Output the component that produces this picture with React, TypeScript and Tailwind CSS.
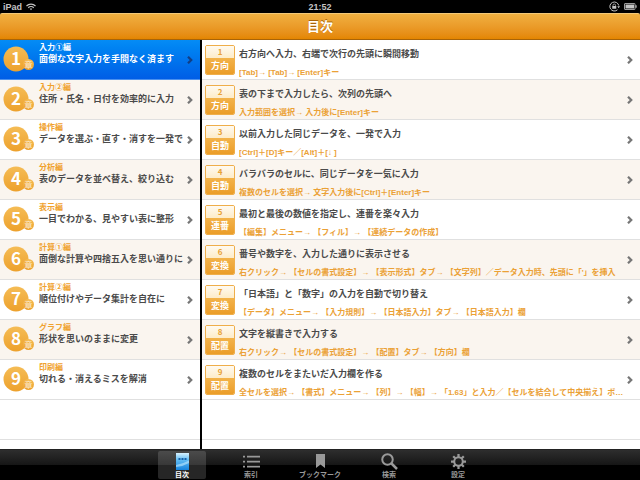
import type { ReactNode } from "react";

const chapters = [
  { label: "入力①編", title: "面倒な文字入力を手間なく済ます" },
  { label: "入力②編", title: "住所・氏名・日付を効率的に入力" },
  { label: "操作編", title: "データを選ぶ・直す・消すを一発で" },
  { label: "分析編", title: "表のデータを並べ替え、絞り込む" },
  { label: "表示編", title: "一目でわかる、見やすい表に整形" },
  { label: "計算①編", title: "面倒な計算や四捨五入を思い通りに" },
  { label: "計算②編", title: "順位付けやデータ集計を自在に" },
  { label: "グラフ編", title: "形状を思いのままに変更" },
  { label: "印刷編", title: "切れる・消えるミスを解消" },
];

const tips = [
  { tag: "方向", title: "右方向へ入力、右端で次行の先頭に瞬間移動", keys: "[Tab]→ [Tab]→ [Enter]キー" },
  { tag: "方向", title: "表の下まで入力したら、次列の先頭へ", keys: "入力範囲を選択→ 入力後に[Enter]キー" },
  { tag: "自動", title: "以前入力した同じデータを、一発で入力", keys: "[Ctrl]＋[D]キー／[Alt]＋[↓ ]" },
  { tag: "自動", title: "バラバラのセルに、同じデータを一気に入力", keys: "複数のセルを選択→ 文字入力後に[Ctrl]＋[Enter]キー" },
  { tag: "連番", title: "最初と最後の数値を指定し、連番を楽々入力", keys: "【編集】メニュー→ 【フィル】→ 【連続データの作成】" },
  { tag: "変換", title: "番号や数字を、入力した通りに表示させる", keys: "右クリック→ 【セルの書式設定】→ 【表示形式】タブ→ 【文字列】／データ入力時、先頭に「'」を挿入" },
  { tag: "変換", title: "「日本語」と「数字」の入力を自動で切り替え", keys: "【データ】メニュー→ 【入力規則】→ 【日本語入力】タブ→ 【日本語入力】欄" },
  { tag: "配置", title: "文字を縦書きで入力する", keys: "右クリック→ 【セルの書式設定】→ 【配置】タブ→ 【方向】欄" },
  { tag: "配置", title: "複数のセルをまたいだ入力欄を作る", keys: "全セルを選択→ 【書式】メニュー→ 【列】→ 【幅】→ 「1.63」と入力／【セルを結合して中央揃え】ボ…" },
];

function StatusBar() {
  return (
    <div className="grid h-[13px] shrink-0 grid-cols-3 items-center bg-black px-[3px] text-[9px] leading-3 font-bold text-[#c4c4c4]">
      <div className="flex items-center gap-1">
        <span>iPad</span>
        <svg viewBox="0 0 20 15" className="h-2 w-2.5" fill="none" stroke="currentColor" strokeWidth="2.4">
          <path d="M1 5.5C6 .5 14 .5 19 5.5" />
          <path d="M4.5 9C7.5 6 12.5 6 15.5 9" />
          <path d="M7.5 11.2c1.5-1.2 3.5-1.2 5 0L10 14z" fill="currentColor" stroke="none" />
        </svg>
      </div>
      <span className="text-center">21:52</span>
      <div className="flex items-center justify-end gap-1">
        <svg viewBox="0 0 22 22" className="h-[11px] w-[11px]" fill="none" stroke="currentColor" strokeWidth="2">
          <path d="M17 17.5A9 9 0 1 1 19.5 9" />
          <path d="M16.5 10.5h5.5l-2.7 4z" fill="currentColor" stroke="none" />
          <rect x="6.5" y="10" width="8" height="5.5" fill="currentColor" stroke="none" />
          <path d="M8 10V8.5a2.5 2.5 0 0 1 5 0V10" strokeWidth="1.5" />
        </svg>
        <svg viewBox="0 0 26 14" className="h-[7px] w-[13px]" fill="none" stroke="currentColor" strokeWidth="1.6">
          <rect x="1" y="1" width="21" height="12" rx="1" />
          <rect x="3" y="3" width="17" height="8" fill="currentColor" stroke="none" />
          <path d="M24 4.5v5" strokeWidth="2.5" />
        </svg>
      </div>
    </div>
  );
}

function Chevron({ className }: { className: string }) {
  return (
    <svg viewBox="0 0 16 16" className={`h-2 w-2 shrink-0 ${className}`} fill="none" stroke="currentColor" strokeWidth="4.5">
      <path d="M4 1.5 10.5 8 4 14.5" />
    </svg>
  );
}

function ChapterBadge({ number }: { number: number }) {
  return (
    <svg viewBox="0 0 32 28" className="h-7 w-8 shrink-0 font-['Noto_Sans_CJK_JP',sans-serif]" aria-hidden="true">
      <defs>
        <linearGradient id="disc" x1="0" y1="0" x2="0" y2="1">
          <stop offset="0" stopColor="#f5bc55" />
          <stop offset="1" stopColor="#eda12c" />
        </linearGradient>
      </defs>
      <circle cx="13" cy="13" r="12.5" fill="url(#disc)" />
      <circle cx="25.5" cy="18.5" r="5.5" fill="url(#disc)" />
      <text x="13" y="19" textAnchor="middle" fontSize="17" fontWeight="700" fill="#fff">
        {number}
      </text>
      <text x="25.5" y="22" textAnchor="middle" fontSize="8" fill="#fff" opacity=".75">
        章
      </text>
    </svg>
  );
}

function TagBadge({ number, tag }: { number: number; tag: string }) {
  return (
    <span className="flex h-[30px] w-[30px] shrink-0 flex-col overflow-hidden rounded-xs border border-[#efae4a] text-center font-bold">
      <span className="h-3 bg-linear-to-b from-[#fffaf0] to-[#fdecc9] font-['Noto_Sans_CJK_JP',sans-serif] text-[8px] leading-3 text-[#e8a235]">
        {number}
      </span>
      <span className="flex-1 bg-linear-to-b from-[#f3b34a] to-[#eb9d28] text-[9px] leading-4 text-white">
        {tag}
      </span>
    </span>
  );
}

function ChapterRow({ number, label, title, selected }: { number: number; label: string; title: string; selected: boolean }) {
  const tone = selected
    ? "border-[#4a90ee] bg-linear-to-b from-[#058cf5] to-[#015de6] text-white"
    : "border-[#e0e0e0] odd:bg-white even:bg-[#faf5ef] text-[#4a4a4a]";

  return (
    <button type="button" className={`flex h-10 w-full items-center border-b pr-1.5 pl-[3px] text-left ${tone}`}>
      <ChapterBadge number={number} />
      <span className="ml-1 flex h-full min-w-0 flex-1 flex-col pt-px font-['Noto_Sans_CJK_JP',sans-serif] font-bold whitespace-nowrap">
        <span className={`text-[8px] leading-3 ${selected ? "text-white" : "text-[#f0a22e]"}`}>{label}</span>
        <span className="text-[9px] leading-3">{title}</span>
      </span>
      <Chevron className={selected ? "text-[#123e85]" : "text-[#777]"} />
    </button>
  );
}

function TipRow({ number, tag, title, keys }: { number: number; tag: string; title: string; keys: string }) {
  return (
    <button
      type="button"
      className="flex h-10 w-full items-center border-b border-[#e0e0e0] pr-1.5 pl-[3px] text-left odd:bg-white even:bg-[#faf5ef]"
    >
      <TagBadge number={number} tag={tag} />
      <span className="ml-1 flex h-full min-w-0 flex-1 flex-col justify-between pt-2 font-bold">
        <span className="truncate text-[9px] leading-3 text-[#4a4a4a]">{title}</span>
        <span className="truncate text-[8px] leading-3 text-[#eba136]">{keys}</span>
      </span>
      <Chevron className="text-[#777]" />
    </button>
  );
}

function TabButton({ label, selected, children }: { label: string; selected?: boolean; children: ReactNode }) {
  return (
    <button
      type="button"
      className={`flex h-7 w-12 flex-col items-center justify-between rounded-xs text-[7px] leading-2 font-bold whitespace-nowrap ${
        selected ? "bg-white/15 text-white" : "text-[#999]"
      }`}
    >
      <span className="flex h-5 items-center">{children}</span>
      {label}
    </button>
  );
}

function TabBar() {
  return (
    <nav className="flex h-[31px] shrink-0 items-center justify-center gap-[21px] border-t border-[#222] bg-linear-to-b from-[#2e2e2e] from-0% via-[#161616] via-50% to-black to-50%">
      <TabButton label="目次" selected>
        <svg viewBox="0 0 26 34" className="h-[17px] w-[13px]">
          <defs>
            <linearGradient id="book" x1="0" y1="0" x2="0" y2="1">
              <stop offset="0" stopColor="#d8f2ff" />
              <stop offset=".4" stopColor="#62bdf4" />
              <stop offset="1" stopColor="#1583dd" />
            </linearGradient>
          </defs>
          <rect width="26" height="34" fill="url(#book)" />
          <path d="M0 24Q13 22 26 15V20Q14 27 0 28z" fill="#b9e5fc" opacity=".65" />
          <path d="M5 12h4M11 12h4M17 12h4" stroke="#1761a8" strokeWidth="4" />
        </svg>
      </TabButton>
      <TabButton label="索引">
        <svg viewBox="0 0 34 26" className="h-[13px] w-[17px]" stroke="#999" strokeWidth="3.5">
          <path d="M0 3h4M8 3h26M0 13h4M8 13h26M0 23h4M8 23h26" />
        </svg>
      </TabButton>
      <TabButton label="ブックマーク">
        <svg viewBox="0 0 18 28" className="h-3.5 w-[9px]" fill="#999">
          <path d="M0 0h18v28l-9-7-9 7z" />
        </svg>
      </TabButton>
      <TabButton label="検索">
        <svg viewBox="0 0 34 34" className="h-[17px] w-[17px]" fill="none" stroke="#999">
          <circle cx="13" cy="13" r="10.5" strokeWidth="4" />
          <path d="M21 21l11 11" strokeWidth="5" />
        </svg>
      </TabButton>
      <TabButton label="設定">
        <svg viewBox="0 0 30 30" className="h-[15px] w-[15px]" fill="none" stroke="#999">
          <circle cx="15" cy="15" r="8.5" strokeWidth="4" />
          <path
            d="M15 0v6M15 24v6M0 15h6M24 15h6M4.4 4.4l4.2 4.2M21.4 21.4l4.2 4.2M4.4 25.6l4.2-4.2M21.4 8.6l4.2-4.2"
            strokeWidth="4.5"
          />
        </svg>
      </TabButton>
    </nav>
  );
}

export default function App() {
  return (
    <div lang="ja" className="flex h-screen flex-col overflow-hidden bg-black font-['Liberation_Sans','Noto_Sans_CJK_JP',sans-serif]">
      <StatusBar />
      <header className="flex h-[27px] shrink-0 items-center justify-center rounded-t-xs border-t border-b border-t-[#f3c878] border-b-[#a86408] bg-linear-to-b from-[#f0b040] to-[#e48600]">
        <h1 className="text-[13px] leading-4 font-bold text-white text-shadow-[0_-1px_0_#a86408]">目次</h1>
      </header>
      <main className="flex min-h-0 flex-1 gap-0.5">
        <div className="w-50 shrink-0 bg-white">
          {chapters.map((chapter, i) => (
            <ChapterRow key={chapter.label} number={i + 1} selected={i === 0} {...chapter} />
          ))}
          <div className="h-10 border-b border-[#e0e0e0]" />
        </div>
        <div className="min-w-0 flex-1 bg-white">
          {tips.map((tip, i) => (
            <TipRow key={tip.title} number={i + 1} {...tip} />
          ))}
          <div className="h-10 border-b border-[#e0e0e0]" />
        </div>
      </main>
      <TabBar />
    </div>
  );
}
